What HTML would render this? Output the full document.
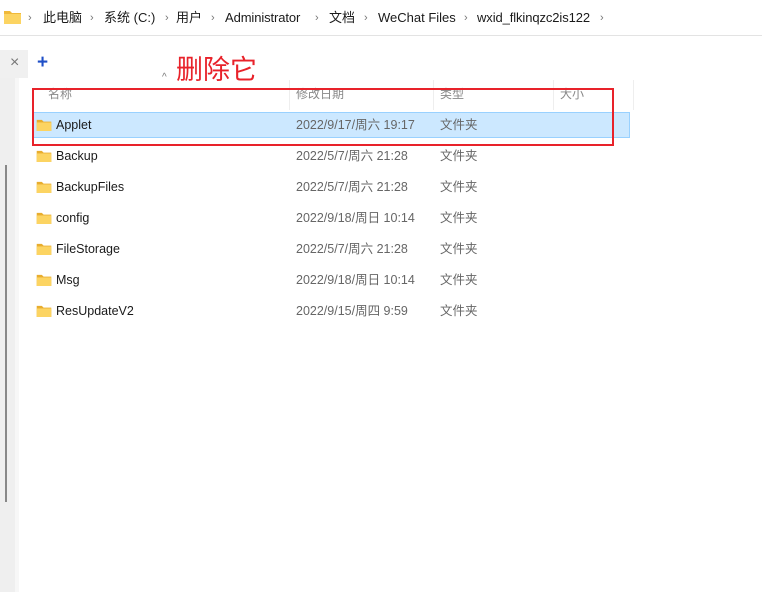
<!DOCTYPE html>
<html><head><meta charset="utf-8"><style>
body{margin:0;width:762px;height:592px;background:#fff;position:relative;overflow:hidden;font-family:"Liberation Sans","Microsoft YaHei","Noto Sans CJK SC",sans-serif;}
.a{position:absolute;}
.c{position:absolute;top:9px;font-size:13px;line-height:17px;color:#1a1a1a;white-space:nowrap}
.s{position:absolute;top:10px;font-size:11px;line-height:17px;color:#777}
.hdr{top:85px;font-size:12px;color:#888}
.row{position:absolute;left:33px;width:597px;height:26px;font-size:12.5px;color:#1a1a1a}
.row span{position:absolute;top:5px;line-height:16px;height:16px}
.row .d,.row .t{color:#666}
.fold{position:absolute;left:3px;top:7px;width:16px;height:12px}
</style></head><body>
<div class="a" style="left:0;top:35px;width:762px;height:1px;background:#e3e3e3"></div>
<svg class="a" style="left:4px;top:10px" width="17" height="14"><path d="M0 1h6l2 2h9v11H0z" fill="#f0b93a"/><path d="M0 4h17v10H0z" fill="#fcd462"/></svg>
<span class="s" style="left:28px">›</span><span class="c" style="left:43px">此电脑</span>
<span class="s" style="left:90px">›</span><span class="c" style="left:104px">系统 (C:)</span>
<span class="s" style="left:165px">›</span><span class="c" style="left:176px">用户</span>
<span class="s" style="left:211px">›</span><span class="c" style="left:225px;letter-spacing:-0.1px">Administrator</span>
<span class="s" style="left:315px">›</span><span class="c" style="left:329px">文档</span>
<span class="s" style="left:364px">›</span><span class="c" style="left:378px">WeChat Files</span>
<span class="s" style="left:464px">›</span><span class="c" style="left:477px;letter-spacing:-0.1px">wxid_flkinqzc2is122</span>
<span class="s" style="left:600px">›</span>
<div class="a" style="left:0;top:50px;width:28px;height:28px;background:#f0f0f0"></div>
<div class="a" style="left:10px;top:54px;font-size:16px;color:#777">×</div>
<div class="a" style="left:0;top:78px;width:15px;height:514px;background:#efefef"></div>
<div class="a" style="left:15px;top:78px;width:4px;height:514px;background:#f7f7f7"></div>
<div class="a" style="left:5px;top:165px;width:2px;height:337px;background:#888"></div>
<div class="a" style="left:37px;top:52px;font-size:19px;font-weight:bold;color:#1f4fc7">+</div>
<div class="a" style="left:162px;top:72px;font-size:10px;color:#777">^</div>
<div class="a" style="left:176px;top:48px;font-size:27px;color:#e8222a">删除它</div>
<div class="a" style="left:289px;top:80px;width:1px;height:30px;background:#eee"></div>
<div class="a" style="left:433px;top:80px;width:1px;height:30px;background:#eee"></div>
<div class="a" style="left:553px;top:80px;width:1px;height:30px;background:#eee"></div>
<div class="a" style="left:633px;top:80px;width:1px;height:30px;background:#eee"></div>
<div class="a hdr" style="left:48px">名称</div>
<div class="a hdr" style="left:296px">修改日期</div>
<div class="a hdr" style="left:440px">类型</div>
<div class="a hdr" style="left:560px">大小</div>
<div class="row" style="top:112px;background:#cce8ff;border:1px solid #99d1ff;box-sizing:border-box"></div>
<div class="row" style="top:112px"><svg class="fold" viewBox="0 0 17 14"><path d="M0 1h6l2 2h9v11H0z" fill="#e8ad2e"/><path d="M0 4h17v10H0z" fill="#fcd462"/></svg><span style="left:23px">Applet</span><span class="d" style="left:263px">2022/9/17/周六 19:17</span><span class="t" style="left:407px">文件夹</span></div>
<div class="row" style="top:143px"><svg class="fold" viewBox="0 0 17 14"><path d="M0 1h6l2 2h9v11H0z" fill="#e8ad2e"/><path d="M0 4h17v10H0z" fill="#fcd462"/></svg><span style="left:23px">Backup</span><span class="d" style="left:263px">2022/5/7/周六 21:28</span><span class="t" style="left:407px">文件夹</span></div>
<div class="row" style="top:174px"><svg class="fold" viewBox="0 0 17 14"><path d="M0 1h6l2 2h9v11H0z" fill="#e8ad2e"/><path d="M0 4h17v10H0z" fill="#fcd462"/></svg><span style="left:23px">BackupFiles</span><span class="d" style="left:263px">2022/5/7/周六 21:28</span><span class="t" style="left:407px">文件夹</span></div>
<div class="row" style="top:205px"><svg class="fold" viewBox="0 0 17 14"><path d="M0 1h6l2 2h9v11H0z" fill="#e8ad2e"/><path d="M0 4h17v10H0z" fill="#fcd462"/></svg><span style="left:23px">config</span><span class="d" style="left:263px">2022/9/18/周日 10:14</span><span class="t" style="left:407px">文件夹</span></div>
<div class="row" style="top:236px"><svg class="fold" viewBox="0 0 17 14"><path d="M0 1h6l2 2h9v11H0z" fill="#e8ad2e"/><path d="M0 4h17v10H0z" fill="#fcd462"/></svg><span style="left:23px">FileStorage</span><span class="d" style="left:263px">2022/5/7/周六 21:28</span><span class="t" style="left:407px">文件夹</span></div>
<div class="row" style="top:267px"><svg class="fold" viewBox="0 0 17 14"><path d="M0 1h6l2 2h9v11H0z" fill="#e8ad2e"/><path d="M0 4h17v10H0z" fill="#fcd462"/></svg><span style="left:23px">Msg</span><span class="d" style="left:263px">2022/9/18/周日 10:14</span><span class="t" style="left:407px">文件夹</span></div>
<div class="row" style="top:298px"><svg class="fold" viewBox="0 0 17 14"><path d="M0 1h6l2 2h9v11H0z" fill="#e8ad2e"/><path d="M0 4h17v10H0z" fill="#fcd462"/></svg><span style="left:23px">ResUpdateV2</span><span class="d" style="left:263px">2022/9/15/周四 9:59</span><span class="t" style="left:407px">文件夹</span></div>
<div class="a" style="left:32px;top:88px;width:578px;height:54px;border:2px solid #e8222a"></div>
</body></html>
